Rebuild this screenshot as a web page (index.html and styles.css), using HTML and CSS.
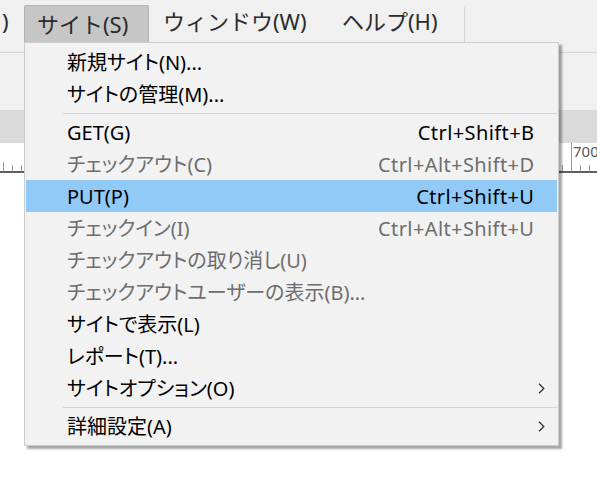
FILE: index.html
```html
<!DOCTYPE html>
<html lang="ja">
<head>
<meta charset="utf-8">
<title>サイト メニュー</title>
<link rel="stylesheet" href="styles.css">
</head>
<body>
<div class="app">
  <div class="menubar">
    <div class="mb-item mb-clip">)</div>
    <div class="mb-item mb-active">サイト(S)</div>
    <div class="mb-item mb-window">ウィンドウ(W)</div>
    <div class="mb-item mb-help">ヘルプ(H)</div>
  </div>
  <div class="toolbar"></div>
  <div class="tabbar"></div>
  <div class="ruler">
    <div class="ticks-left">
      <span class="tick tick-mid"></span>
      <span class="tick"></span>
      <span class="tick"></span>
    </div>
    <div class="ticks-right">
      <span class="tick"></span>
      <span class="tick tick-major"><span class="ruler-label">700</span></span>
      <span class="tick"></span>
      <span class="tick"></span>
    </div>
  </div>
  <div class="canvas"></div>

  <div class="menu">
    <div class="mi"><span class="mi-label">新規サイト(N)...</span></div>
    <div class="mi"><span class="mi-label">サイトの管理(M)...</span></div>
    <div class="sep"></div>
    <div class="mi"><span class="mi-label">GET(G)</span><span class="mi-key">Ctrl+Shift+B</span></div>
    <div class="mi disabled"><span class="mi-label">チェックアウト(C)</span><span class="mi-key">Ctrl+Alt+Shift+D</span></div>
    <div class="mi hover"><span class="mi-label">PUT(P)</span><span class="mi-key">Ctrl+Shift+U</span></div>
    <div class="mi disabled"><span class="mi-label">チェックイン(I)</span><span class="mi-key">Ctrl+Alt+Shift+U</span></div>
    <div class="mi disabled"><span class="mi-label">チェックアウトの取り消し(U)</span></div>
    <div class="mi disabled"><span class="mi-label">チェックアウトユーザーの表示(B)...</span></div>
    <div class="mi"><span class="mi-label">サイトで表示(L)</span></div>
    <div class="mi"><span class="mi-label">レポート(T)...</span></div>
    <div class="mi"><span class="mi-label">サイトオプション(O)</span><span class="mi-sub"><svg width="7" height="11" viewBox="0 0 7 11"><path d="M1 0.8 L5.8 5.5 L1 10.2" fill="none" stroke="#333" stroke-width="1.3"/></svg></span></div>
    <div class="sep"></div>
    <div class="mi"><span class="mi-label">詳細設定(A)</span><span class="mi-sub"><svg width="7" height="11" viewBox="0 0 7 11"><path d="M1 0.8 L5.8 5.5 L1 10.2" fill="none" stroke="#333" stroke-width="1.3"/></svg></span></div>
  </div>
</div>
</body>
</html>
```
FILE: styles.css
```css
* { box-sizing: border-box; }
html, body { margin: 0; padding: 0; }
body {
  width: 597px;
  height: 477px;
  overflow: hidden;
  background: #ffffff;
  font-family: "Noto Sans", "Noto Sans CJK JP", sans-serif;
}
.app {
  position: relative;
  width: 597px;
  height: 477px;
  display: flex;
  flex-direction: column;
}
.menubar {
  height: 42px;
  background: #f0f0f0;
  display: flex;
  font-size: 22px;
  color: #2b2b2b;
}
.mb-item {
  display: flex;
  align-items: center;
  white-space: nowrap;
  line-height: 1;
}
.mb-clip { width: 24px; padding-left: 2px; }
.mb-active {
  width: 125px;
  margin-top: 5px;
  padding-left: 12px;
  background: #c6c6c6;
  border: 1px solid #b4b4b4;
  border-bottom: none;
  border-radius: 2px 2px 0 0;
}
.mb-window { width: 179px; padding-left: 14px; }
.mb-help {
  width: 137px;
  padding-left: 14px;
  margin-top: 7px;
  border-right: 1px solid #d6d6d6;
  padding-bottom: 7px;
}
.toolbar {
  height: 68px;
  background: #f0f0f0;
  border-top: 10px solid #f0f0f0;
  box-shadow: inset 0 1px 0 #d4d4d4;
}
.tabbar {
  height: 33px;
  background: #dadada;
}
.ruler {
  height: 30px;
  background: #ffffff;
  border-bottom: 2px solid #606060;
  display: flex;
  justify-content: space-between;
  align-items: flex-end;
}
.ticks-left {
  display: flex;
  align-items: flex-end;
  gap: 8px;
  padding-left: 3px;
}
.ticks-right {
  display: flex;
  align-items: flex-end;
  gap: 8px;
  padding-right: 7px;
}
.tick {
  width: 1px;
  height: 6px;
  background: #9a9a9a;
}
.tick-mid { height: 9px; }
.tick-major {
  position: relative;
  height: 28px;
  background: #9a9a9a;
}
.ruler-label {
  position: absolute;
  left: 2px;
  top: 1px;
  font-size: 15px;
  line-height: 1;
  color: #555555;
}
.canvas { flex: 1; background: #ffffff; }

.menu {
  position: absolute;
  left: 24px;
  top: 42px;
  width: 535px;
  background: #f2f2f2;
  border: 1px solid #cccccc;
  padding: 3px 1px;
  box-shadow: 3px 3px 2px rgba(0, 0, 0, 0.35);
  font-size: 20px;
  font-feature-settings: "palt";
  color: #000000;
}
.mi {
  height: 32px;
  display: flex;
  align-items: center;
  padding-left: 41px;
  padding-right: 23px;
  white-space: nowrap;
  line-height: 32px;
}
.mi-label { flex: 1; padding-top: 2px; }
.mi-key { padding-top: 2px; letter-spacing: 0.4px; margin-right: -0.4px; }
.mi.hover { background: #91c9f7; }
.mi.disabled { color: #6d6d6d; }
.mi-sub {
  display: flex;
  align-items: center;
  margin-right: -11px;
}
.sep {
  height: 6px;
  margin-left: 37px;
  display: flex;
  align-items: center;
}
.sep::before {
  content: "";
  flex: 1;
  height: 1px;
  background: #d4d4d4;
}
```
